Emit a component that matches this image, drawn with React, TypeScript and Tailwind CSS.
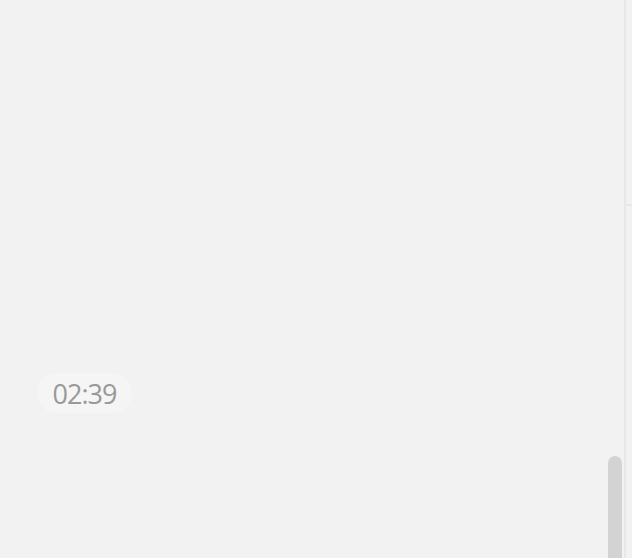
export default function App() {
  return (
    <div className="flex h-[558px] w-[632px] overflow-hidden bg-[#f2f2f2]" style={{ fontFamily: '"Open Sans", "Noto Sans CJK SC", sans-serif' }}>
      <div className="relative flex-1">
        <div className="pl-[37px] pt-[373px]">
          <div className="inline-flex h-[40px] w-[95px] items-center justify-center rounded-full bg-[#f5f5f5] pt-[2px] text-[27px] tracking-[-1px] text-[#999999]">
            02:39
          </div>
        </div>
        <div className="absolute right-[2px] top-[456px] h-[120px] w-[14px] rounded-full bg-[#d3d3d3]" />
      </div>
      <div className="w-[2px] bg-[#e8e8e8]" />
      <div className="flex w-[6px] flex-col">
        <div className="h-[204px]" />
        <div className="h-[2px] bg-[#e8e8e8]" />
      </div>
    </div>
  )
}
